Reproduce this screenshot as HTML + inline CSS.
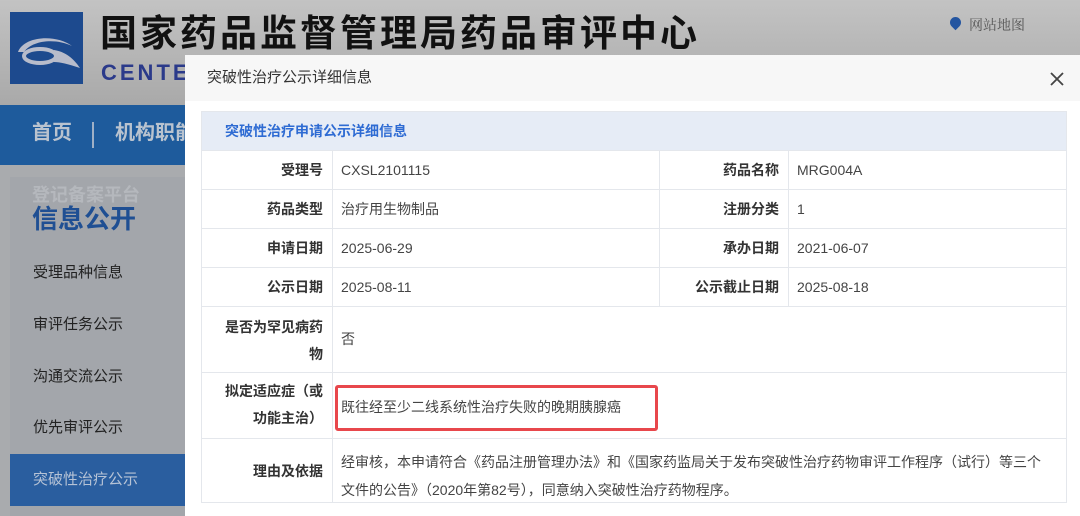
<!DOCTYPE html>
<html><head><meta charset="utf-8"><style>
*{margin:0;padding:0;box-sizing:border-box}
body{width:1080px;height:516px;overflow:hidden;position:relative;background:#a9abae;font-family:"Liberation Sans","Noto Sans CJK SC",sans-serif}
.a{position:absolute;white-space:nowrap}
.lab{position:absolute;text-align:right;color:#333;font-weight:bold;font-size:14px;line-height:20px}
.val{position:absolute;color:#444;font-size:14px;line-height:20px;white-space:nowrap}
.h{position:absolute;height:1px;background:#e4e7ec}
.v{position:absolute;width:1px;background:#e4e7ec}
.side{position:absolute;left:33px;font-size:15px;color:#222;line-height:20px}
</style></head><body>
<div class="a" style="left:0;top:0;width:1080px;height:105px;background:linear-gradient(#c3c3c3,#a9a9a9)"></div>
<div class="a" style="left:10px;top:12px;width:73px;height:72px;background:#1d4a8e">
<svg width="73" height="72" viewBox="0 0 73 72"><path d="M8 40 C14 24 46 22 62 34 C46 26 22 28 14 40 Z" fill="#b8bccb"/><ellipse cx="30" cy="44" rx="16" ry="7" fill="none" stroke="#b8bccb" stroke-width="4"/><path d="M44 38 C58 40 66 50 70 56 C58 52 50 50 44 50 Z" fill="#b8bccb"/></svg></div>
<div class="a" style="left:100px;top:8px;font-size:37px;line-height:44px;font-weight:bold;color:#111;letter-spacing:3px;font-family:'Noto Sans CJK SC',sans-serif">国家药品监督管理局药品审评中心</div>
<div class="a" style="left:101px;top:60px;font-size:22px;font-weight:bold;color:#2b3a8a;letter-spacing:3px">CENTE</div>
<div class="a" style="left:950px;top:17px;width:11px;height:11px;border-radius:50% 50% 50% 0;transform:rotate(-45deg);background:#2455a0"></div>
<div class="a" style="left:969px;top:15px;font-size:14px;color:#555;font-family:'Noto Serif CJK SC',serif">网站地图</div>
<div class="a" style="left:0;top:105px;width:1080px;height:60px;background:#1e5b9c"></div>
<div class="a" style="left:32px;top:120px;font-size:20px;line-height:26px;font-weight:bold;color:#b9c3cf">首页</div>
<div class="a" style="left:92px;top:122px;width:2px;height:26px;background:#9fb0c6"></div>
<div class="a" style="left:115px;top:120px;font-size:20px;line-height:26px;font-weight:bold;color:#b9c3cf">机构职能</div>
<div class="a" style="left:10px;top:177px;width:180px;height:339px;background:#a3a6ab"></div>
<div class="a" style="left:32px;top:181px;font-size:18px;font-weight:bold;color:#b5b8bd">登记备案平台</div>
<div class="a" style="left:32px;top:199px;font-size:26px;font-weight:bold;color:#1f4f93">信息公开</div>
<div class="side" style="top:263px">受理品种信息</div>
<div class="side" style="top:315px">审评任务公示</div>
<div class="side" style="top:367px">沟通交流公示</div>
<div class="side" style="top:418px">优先审评公示</div>
<div class="a" style="left:10px;top:454px;width:180px;height:52px;background:#2a5e9f"></div>
<div class="side" style="top:470px;color:#b6c3d6">突破性治疗公示</div>
<div class="a" style="left:185px;top:55px;width:895px;height:461px;background:#fff"></div>
<div class="a" style="left:185px;top:55px;width:895px;height:46px;background:#f7f7f7"></div>
<div class="a" style="left:207px;top:68px;font-size:15px;line-height:20px;color:#333">突破性治疗公示详细信息</div>
<svg class="a" style="left:1050px;top:72px" width="14" height="14" viewBox="0 0 14 14"><path d="M1 1L13 13M13 1L1 13" stroke="#444" stroke-width="1.8"/></svg>
<div class="a" style="left:201px;top:111px;width:866px;height:392px;border:1px solid #e4e7ec"></div>
<div class="a" style="left:202px;top:112px;width:864px;height:38px;background:#e6ecf6"></div>
<div class="a" style="left:225px;top:121px;font-size:14px;line-height:20px;font-weight:bold;color:#2e6bd3">突破性治疗申请公示详细信息</div>
<div class="h" style="left:201px;top:150px;width:866px"></div>
<div class="h" style="left:201px;top:189px;width:866px"></div>
<div class="h" style="left:201px;top:228px;width:866px"></div>
<div class="h" style="left:201px;top:267px;width:866px"></div>
<div class="h" style="left:201px;top:306px;width:866px"></div>
<div class="h" style="left:201px;top:372px;width:866px"></div>
<div class="h" style="left:201px;top:438px;width:866px"></div>
<div class="v" style="left:332px;top:150px;height:353px"></div>
<div class="v" style="left:659px;top:150px;height:156px"></div>
<div class="v" style="left:788px;top:150px;height:156px"></div>
<div class="lab" style="left:201px;width:122px;top:160px">受理号</div>
<div class="lab" style="left:201px;width:122px;top:199px">药品类型</div>
<div class="lab" style="left:201px;width:122px;top:238px">申请日期</div>
<div class="lab" style="left:201px;width:122px;top:277px">公示日期</div>
<div class="lab" style="left:201px;width:122px;top:314px;line-height:27px">是否为罕见病药<br>物</div>
<div class="lab" style="left:201px;width:122px;top:378px;line-height:27px">拟定适应症（或<br>功能主治）</div>
<div class="lab" style="left:201px;width:122px;top:461px">理由及依据</div>
<div class="lab" style="left:660px;width:119px;top:160px">药品名称</div>
<div class="lab" style="left:660px;width:119px;top:199px">注册分类</div>
<div class="lab" style="left:660px;width:119px;top:238px">承办日期</div>
<div class="lab" style="left:660px;width:119px;top:277px">公示截止日期</div>
<div class="val" style="left:341px;top:160px">CXSL2101115</div>
<div class="val" style="left:341px;top:199px">治疗用生物制品</div>
<div class="val" style="left:341px;top:238px">2025-06-29</div>
<div class="val" style="left:341px;top:277px">2025-08-11</div>
<div class="val" style="left:341px;top:329px">否</div>
<div class="val" style="left:341px;top:397px">既往经至少二线系统性治疗失败的晚期胰腺癌</div>
<div class="val" style="left:341px;top:448px;line-height:28px">经审核，本申请符合《药品注册管理办法》和《国家药监局关于发布突破性治疗药物审评工作程序（试行）等三个<br>文件的公告》（2020年第82号），同意纳入突破性治疗药物程序。</div>
<div class="val" style="left:797px;top:160px">MRG004A</div>
<div class="val" style="left:797px;top:199px">1</div>
<div class="val" style="left:797px;top:238px">2021-06-07</div>
<div class="val" style="left:797px;top:277px">2025-08-18</div>
<div class="a" style="left:335px;top:385px;width:323px;height:46px;border:3px solid #e8474c;border-radius:3px"></div>
</body></html>
